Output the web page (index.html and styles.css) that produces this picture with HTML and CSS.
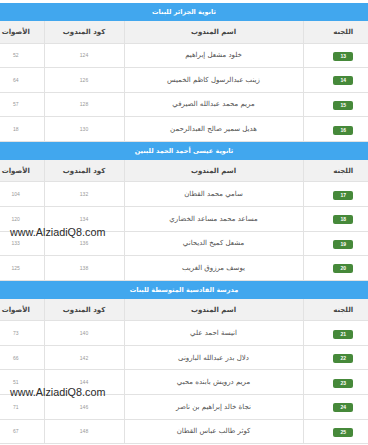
FILE: index.html
```html
<!DOCTYPE html>
<html lang="ar" dir="rtl">
<head>
<meta charset="utf-8">
<title>المندوبين</title>
<link rel="stylesheet" href="styles.css">
</head>
<body>
<div class="page">
<table class="results">
  <colgroup>
    <col class="c-com"><col class="c-name"><col class="c-code"><col class="c-votes">
  </colgroup>
  <tbody>
    <tr class="title"><td colspan="4">ثانوية الجزائر للبنات</td></tr>
    <tr class="head"><th class="com">اللجنه</th><th>اسم المندوب</th><th>كود المندوب</th><th class="votes">الأصوات</th></tr>
    <tr><td class="com"><span class="badge">13</span></td><td class="name">خلود مشعل إبراهيم</td><td class="num">124</td><td class="num votes">52</td></tr>
    <tr><td class="com"><span class="badge">14</span></td><td class="name">زينب عبدالرسول كاظم الخميس</td><td class="num">126</td><td class="num votes">64</td></tr>
    <tr><td class="com"><span class="badge">15</span></td><td class="name">مريم محمد عبدالله الصيرفي</td><td class="num">128</td><td class="num votes">57</td></tr>
    <tr><td class="com"><span class="badge">16</span></td><td class="name">هديل سمير صالح العبدالرحمن</td><td class="num">130</td><td class="num votes">18</td></tr>
  </tbody>
  <tbody>
    <tr class="title"><td colspan="4">ثانوية عيسى أحمد الحمد للبنين</td></tr>
    <tr class="head"><th class="com">اللجنه</th><th>اسم المندوب</th><th>كود المندوب</th><th class="votes">الأصوات</th></tr>
    <tr><td class="com"><span class="badge">17</span></td><td class="name">سامي محمد القطان</td><td class="num">132</td><td class="num votes">104</td></tr>
    <tr><td class="com"><span class="badge">18</span></td><td class="name">مساعد محمد مساعد الخضاري</td><td class="num">134</td><td class="num votes">120</td></tr>
    <tr><td class="com"><span class="badge">19</span></td><td class="name">مشعل كميخ الديحاني</td><td class="num">136</td><td class="num votes">133</td></tr>
    <tr><td class="com"><span class="badge">20</span></td><td class="name">يوسف مرزوق الغريب</td><td class="num">138</td><td class="num votes">125</td></tr>
  </tbody>
  <tbody>
    <tr class="title"><td colspan="4">مدرسة القادسية المتوسطة للبنات</td></tr>
    <tr class="head"><th class="com">اللجنه</th><th>اسم المندوب</th><th>كود المندوب</th><th class="votes">الأصوات</th></tr>
    <tr><td class="com"><span class="badge">21</span></td><td class="name">انيسة احمد علي</td><td class="num">140</td><td class="num votes">73</td></tr>
    <tr><td class="com"><span class="badge">22</span></td><td class="name">دلال بدر عبدالله البارونى</td><td class="num">142</td><td class="num votes">66</td></tr>
    <tr><td class="com"><span class="badge">23</span></td><td class="name">مريم درويش بابنده محبي</td><td class="num">144</td><td class="num votes">51</td></tr>
    <tr><td class="com"><span class="badge">24</span></td><td class="name">نجاة خالد إبراهيم بن ناصر</td><td class="num">146</td><td class="num votes">71</td></tr>
    <tr><td class="com"><span class="badge">25</span></td><td class="name">كوثر طالب عباس القطان</td><td class="num">148</td><td class="num votes">67</td></tr>
  </tbody>
</table>
<div class="watermark wm-1" dir="ltr">www.AlziadiQ8.com</div>
<div class="watermark wm-2" dir="ltr">www.AlziadiQ8.com</div>
</div>
</body>
</html>
```

FILE: styles.css
```css
html, body {
  margin: 0;
  padding: 0;
  background: #ffffff;
}
body {
  font-family: "DejaVu Sans", "Noto Sans", sans-serif;
  overflow: hidden;
}
.page {
  position: relative;
  padding-top: 3px;
  width: 368px;
}
.results {
  width: 368px;
  border-collapse: collapse;
  table-layout: fixed;
}
.c-com { width: 65px; }
.c-name { width: 179px; }
.c-code { width: 80px; }
.c-votes { width: 44px; }

.results td, .results th {
  padding: 0;
  text-align: center;
  border-left: 1px solid #e2e2e2;
  border-bottom: 1px solid #e2e2e2;
  height: 23.6px;
}
.results td:last-child, .results th:last-child {
  border-left: none;
}
.results .com {
  padding-left: 15px;
}
.results .votes {
  padding-right: 12px;
}
.title td {
  background: #41a7ee;
  color: #ffffff;
  font-size: 6.5px;
  font-weight: bold;
  height: 18px;
  border: none;
}
.head th {
  background: #f1f1f1;
  color: #444;
  font-size: 7px;
  font-weight: bold;
  height: 21.5px;
}
.name {
  font-size: 7px;
  color: #505050;
}
.num {
  font-family: "Liberation Sans", Arial, sans-serif;
  font-size: 5px;
  color: #999;
}
.badge {
  display: inline-block;
  width: 20px;
  height: 9px;
  line-height: 9px;
  border-radius: 2px;
  background: #46893a;
  color: #ffffff;
  font-family: "Liberation Sans", Arial, sans-serif;
  font-size: 5px;
  font-weight: bold;
  vertical-align: middle;
}
.watermark {
  position: absolute;
  left: 10px;
  font-family: "Liberation Sans", Arial, sans-serif;
  font-size: 10.8px;
  line-height: 11px;
  color: #2a2a2a;
}
.wm-1 { top: 227px; }
.wm-2 { top: 387px; }
```
